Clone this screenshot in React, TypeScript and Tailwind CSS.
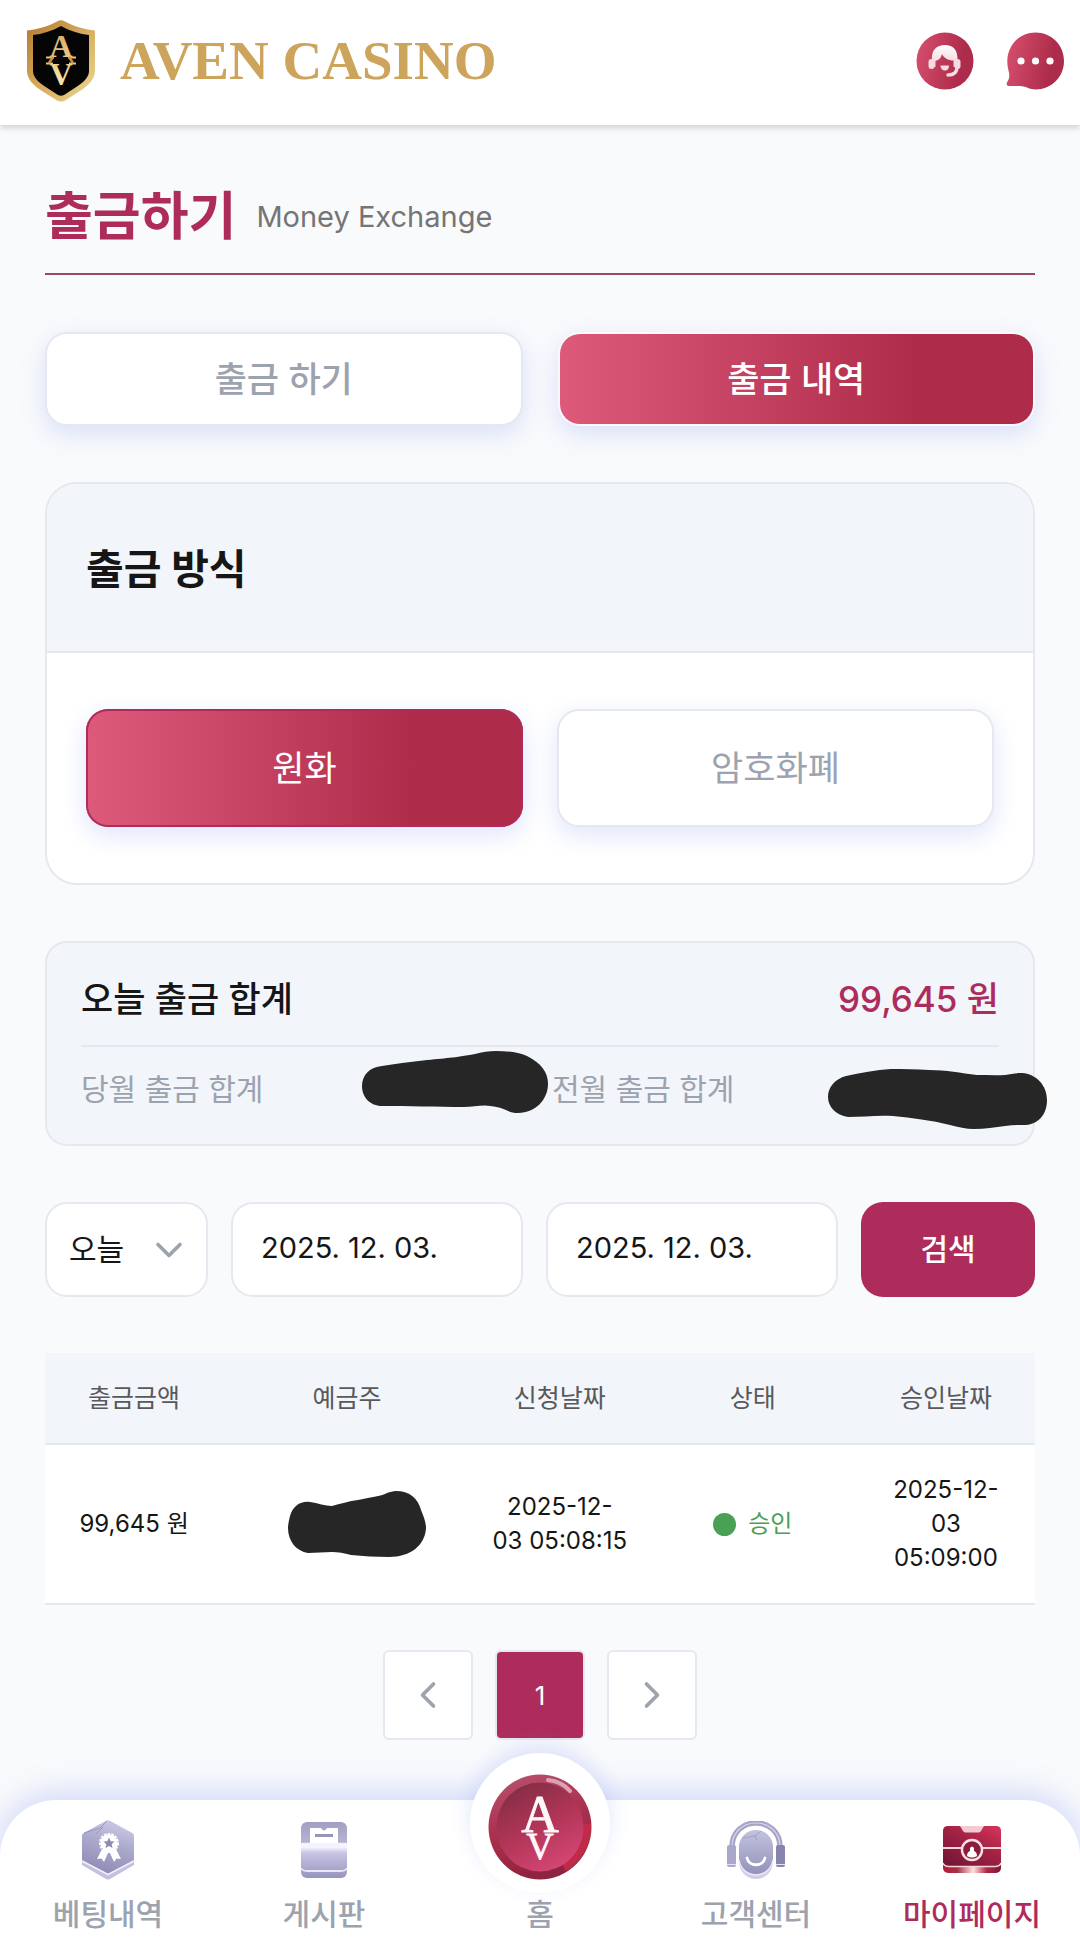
import { useState, type ReactNode } from "react";
import { ChevronDown, ChevronLeft, ChevronRight } from "lucide-react";

interface NavItem {
  label: string;
  href: string;
  icon: ReactNode;
}

interface Withdrawal {
  id: number;
  amount: string;
  requested: string[];
  status: string;
  approved: string[];
}

const withdrawals: Withdrawal[] = [
  {
    id: 1,
    amount: "99,645 원",
    requested: ["2025-12-", "03 05:08:15"],
    status: "승인",
    approved: ["2025-12-", "03", "05:09:00"],
  },
];

function ShieldLogo() {
  return (
    <svg width="70" height="84" viewBox="0 0 70 84" aria-hidden="true">
      <defs>
        <linearGradient id="gold" x1="0" y1="0" x2="1" y2="1">
          <stop offset="0" stopColor="#b5792f" />
          <stop offset="0.45" stopColor="#d3a659" />
          <stop offset="1" stopColor="#eedb97" />
        </linearGradient>
        <linearGradient id="goldText" x1="0" y1="0" x2="0" y2="1">
          <stop offset="0" stopColor="#d9a75c" />
          <stop offset="1" stopColor="#fbeeba" />
        </linearGradient>
      </defs>
      <path
        d="M35 1.5 Q36 1 38 2 C47 7 58 10.500 69 11.500 V52 C69 60 62 67 54 72 L39 81.500 Q35 83.500 31 81.500 L16 72 C8 67 1 60 1 52 V11.500 C12 10.500 23 7 32 2 Q34 1 35 1.500 Z"
        fill="url(#gold)"
      />
      <path
        d="M35 7 C44 12 54 15 63 16 V52 C63 58 58 63 51 67.500 L38 76 Q35 77.500 32 76 L19 67.500 C12 63 7 58 7 52 V16 C16 15 26 12 35 7 Z"
        fill="#050505"
      />
      <text
        fill="url(#goldText)"
        fontFamily="'Liberation Serif', serif"
        fontWeight="bold"
        fontSize="32"
        textAnchor="middle"
      >
        <tspan x="35" y="38">A</tspan>
        <tspan x="35" y="66">V</tspan>
      </text>
      <path d="M20 38.500 H28 M42 38.500 H50 M20 44.500 H27 M43 44.500 H50" stroke="#e6c27c" strokeWidth="2" />
      <path d="M27 38 L23 44 M43 38 L47 44" stroke="#c89243" strokeWidth="2.500" />
    </svg>
  );
}

function SupportIcon() {
  return (
    <svg width="58" height="58" viewBox="0 0 58 58" aria-hidden="true">
      <defs>
        <linearGradient id="badge" x1="0" y1="0" x2="1" y2="0.2">
          <stop offset="0" stopColor="#d8506f" />
          <stop offset="0.85" stopColor="#ae2c4b" />
        </linearGradient>
        <linearGradient id="hair" x1="0" y1="0" x2="0" y2="1">
          <stop offset="0" stopColor="#fff" />
          <stop offset="1" stopColor="#f1cfd8" />
        </linearGradient>
      </defs>
      <circle cx="29" cy="29" r="28.500" fill="url(#badge)" />
      <path
        d="M16 28 C15 18 21 13 29 13 C37 13 42 18 41.500 28 L41 35 L37.500 35 V28.500 C32 28.500 28 26 26 22 C25 26 23 28 19.500 29 V35 H16 Z"
        fill="url(#hair)"
      />
      <rect x="12.500" y="27" width="6" height="10" rx="3" fill="#f5dbe2" />
      <rect x="38.500" y="27" width="6" height="10" rx="3" fill="#f5dbe2" />
      <path d="M41 35 C41 40 38 43 32 43" fill="none" stroke="#f5dbe2" strokeWidth="3.500" strokeLinecap="round" />
      <path d="M24.500 33.500 H33 C33 36.500 31.500 38.500 29 38.500 C26.500 38.500 24.500 36.500 24.500 33.500 Z" fill="#f5dbe2" />
    </svg>
  );
}

function ChatIcon() {
  return (
    <svg width="58" height="58" viewBox="0 0 58 58" aria-hidden="true">
      <path
        d="M29.500 0.500 C45.500 0.500 58 13 58 29 C58 45 45.500 57.500 29.500 57.500 C24 57.500 19 54 14 54 H3 C0.500 54 0 52 1.500 49.500 C4 46 3.500 42 2.500 38.500 C-3 18 11 0.500 29.500 0.500 Z"
        fill="url(#badge)"
      />
      <circle cx="15" cy="29" r="3.600" fill="#fff" />
      <circle cx="29.500" cy="29" r="3.600" fill="#fff" />
      <circle cx="44" cy="29" r="3.600" fill="#fff" />
    </svg>
  );
}

function HomeCoin() {
  return (
    <svg width="104" height="106" viewBox="0 0 104 106" aria-hidden="true">
      <defs>
        <linearGradient id="rim" x1="0" y1="0" x2="0.300" y2="1">
          <stop offset="0" stopColor="#b85570" />
          <stop offset="0.500" stopColor="#ac3352" />
          <stop offset="0.750" stopColor="#a22a44" />
          <stop offset="1" stopColor="#8f2440" />
        </linearGradient>
        <linearGradient id="coin" x1="0.200" y1="0" x2="0.700" y2="1">
          <stop offset="0" stopColor="#822c44" />
          <stop offset="0.500" stopColor="#b03557" />
          <stop offset="1" stopColor="#d64775" />
        </linearGradient>
      </defs>
      <ellipse cx="52" cy="53" rx="51.500" ry="52.500" fill="url(#rim)" />
      <path d="M103 50 A51 52 0 0 1 78 97 L74 90 C88 82 95 68 95 50 Z" fill="#c02c47" />
      <ellipse cx="52" cy="53" rx="43.500" ry="44.500" fill="url(#coin)" />
      <path d="M60 6 C69 7 77 11 82 17" fill="none" stroke="#dba3b2" strokeWidth="4" strokeLinecap="round" />
      <text
        fill="#fff6fa"
        stroke="#fff6fa"
        strokeWidth="0.800"
        fontFamily="'Liberation Serif', serif"
        textAnchor="middle"
      >
        <tspan x="52" y="58" fontSize="52">A</tspan>
        <tspan x="52" y="85" fontSize="38">V</tspan>
      </text>
    </svg>
  );
}

function BettingIcon() {
  return (
    <svg width="52" height="60" viewBox="0 0 52 60" aria-hidden="true">
      <defs>
        <linearGradient id="lilac" x1="0.800" y1="0" x2="0.500" y2="1">
          <stop offset="0" stopColor="#d0cde9" />
          <stop offset="0.500" stopColor="#a9a7ca" />
          <stop offset="1" stopColor="#8f8db5" />
        </linearGradient>
      </defs>
      <path d="M24 1 Q26 0 28 1 L50 13 Q52 14 52 16 V45 L28 59 Q26 60 24 59 L0 45 V16 Q0 14 2 13 Z" fill="#c4c1e0" />
      <path d="M24 1 Q26 0 28 1 L50 13 Q52 14 52 16 V40 L26 54 L0 40 V16 Q0 14 2 13 Z" fill="url(#lilac)" />
      <path d="M0 41 L26 54.500 L52 41" fill="none" stroke="#efedfa" strokeWidth="1.800" />
      <path d="M2 13 L18 8 L25 1 M14 14 L21 7" stroke="#8c89b0" strokeWidth="0.700" fill="none" />
      <path d="M20 29 L15 39 L19.500 38.500 L22 42 L26 33 H28 L32 42 L34.500 38.500 L39 39 L34 29 Z" fill="#fff" />
      <circle cx="27" cy="23" r="8.500" fill="#fff" stroke="#fff" strokeWidth="3" strokeDasharray="2.500 1" />
      <path
        d="M27 17.500 L28.700 21.200 L32.500 21.600 L29.700 24.200 L30.500 28 L27 26.100 L23.500 28 L24.300 24.200 L21.500 21.600 L25.300 21.200 Z"
        fill="#8e8caf"
      />
    </svg>
  );
}

function BoardIcon() {
  return (
    <svg width="46" height="56" viewBox="0 0 46 56" aria-hidden="true">
      <defs>
        <linearGradient id="board" x1="0" y1="0" x2="0" y2="1">
          <stop offset="0" stopColor="#a19fc2" />
          <stop offset="0.350" stopColor="#b5b3d3" />
          <stop offset="0.450" stopColor="#f5f3ff" />
          <stop offset="0.550" stopColor="#c8c6e4" />
          <stop offset="1" stopColor="#9694bd" />
        </linearGradient>
      </defs>
      <rect width="46" height="56" rx="6" fill="url(#board)" />
      <path d="M9 6 H20 Q23 11 26 6 H37 V21 H9 Z" fill="#fff" />
      <rect x="14" y="12" width="18" height="3" fill="#9795b6" />
      <rect y="21" width="46" height="5" fill="#f4f2fd" />
      <path d="M0 46 Q1 49 6 49 H40 Q45 49 46 46" fill="none" stroke="#ebe9f8" strokeWidth="1.800" />
    </svg>
  );
}

function CenterIcon() {
  return (
    <svg width="58" height="58" viewBox="0 0 58 58" aria-hidden="true">
      <defs>
        <linearGradient id="face" x1="0" y1="0" x2="0" y2="1">
          <stop offset="0" stopColor="#c3c3e0" />
          <stop offset="1" stopColor="#9392bb" />
        </linearGradient>
      </defs>
      <path d="M5 26 C5 -6 53 -6 53 26" fill="none" stroke="#a7a4c8" strokeWidth="5.500" />
      <path d="M5 26 C5 -6 53 -6 53 26" fill="none" stroke="#d8d6ec" strokeWidth="1.200" />
      <rect x="12" y="10" width="34" height="48" rx="17" fill="#cfcde8" />
      <rect x="12" y="9" width="34" height="44" rx="17" fill="url(#face)" />
      <path d="M12 39 C15 59 43 59 46 39" fill="none" stroke="#ebe9f8" strokeWidth="1.500" />
      <rect y="24" width="9" height="22" rx="2" fill="#aaa8ca" />
      <rect x="49" y="24" width="9" height="22" rx="2" fill="#8784ae" />
      <path d="M0 43.500 H9 M49 43.500 H58" stroke="#e3e1f3" strokeWidth="1.200" />
      <path d="M20 37 C22 46 36 46 38 37" fill="none" stroke="#fff" strokeWidth="2.800" strokeLinecap="round" />
      <path d="M16 17 L28 15 L34 10 M28 15 L30 19" fill="none" stroke="#9694b8" strokeWidth="0.700" />
    </svg>
  );
}

function WalletIcon() {
  return (
    <svg width="58" height="48" viewBox="0 0 58 48" aria-hidden="true">
      <defs>
        <linearGradient id="wallet" x1="0" y1="1" x2="0.800" y2="0">
          <stop offset="0" stopColor="#6f1432" />
          <stop offset="0.600" stopColor="#a02243" />
          <stop offset="1" stopColor="#cf3157" />
        </linearGradient>
        <linearGradient id="walletBase" x1="0" y1="0" x2="1" y2="0">
          <stop offset="0" stopColor="#b01f35" />
          <stop offset="0.250" stopColor="#a83144" />
          <stop offset="0.520" stopColor="#fbe3e0" />
          <stop offset="0.750" stopColor="#b02a45" />
          <stop offset="1" stopColor="#7c1838" />
        </linearGradient>
      </defs>
      <rect y="2" width="58" height="45" rx="5" fill="url(#walletBase)" />
      <path d="M5 0 H53 Q58 0 58 5 V36 Q58 40 53 40 H5 Q0 40 0 36 V5 Q0 0 5 0 Z" fill="url(#wallet)" />
      <path d="M17 0 H41 L38 5 Q37 6.500 35 6.500 H23 Q21 6.500 20 5 Z" fill="#f3c9d3" />
      <path d="M0 22 H58" stroke="#f6d3dc" strokeWidth="1.800" />
      <path d="M0 37 Q1 40.500 6 40.500 H52 Q57 40.500 58 37" fill="none" stroke="#f6d3dc" strokeWidth="1.500" />
      <circle cx="29" cy="24" r="10" fill="#8a1d3b" stroke="#fbdfe6" strokeWidth="2.400" />
      <path d="M24 30 Q24 26 27 25 V22 Q29 19 31 22 V25 Q34 26 34 30 Q29 33 24 30 Z" fill="#fff" />
    </svg>
  );
}

const leftItems: NavItem[] = [
  { label: "베팅내역", href: "#bets", icon: <BettingIcon /> },
  { label: "게시판", href: "#board", icon: <BoardIcon /> },
];

const gradientFill = "bg-[linear-gradient(90deg,#de5a7a_0%,#ae2b4a_76%)] text-white";
const softShadow = "shadow-[0_8px_24px_rgba(110,135,240,0.22)]";

function BottomNav() {
  return (
    <nav className="sticky bottom-0 grid grid-cols-5 rounded-t-[56px] bg-white pt-[18px] pb-[17px] text-[30px] leading-9 font-medium text-[#9ca3af] shadow-[0_-6px_32px_rgba(110,135,240,0.3)]">
      {leftItems.map((item) => (
        <a key={item.label} href={item.href} className="flex flex-col items-center gap-[14px]">
          <span className="flex h-16 items-center">{item.icon}</span>
          {item.label}
        </a>
      ))}
      <a href="#home" className="relative flex flex-col items-center pt-[78px]">
        <span className="absolute -top-[65px] flex size-[140px] items-center justify-center rounded-full bg-white pt-2 shadow-[0_-8px_20px_rgba(110,135,240,0.2)]">
          <HomeCoin />
        </span>
        홈
      </a>
      <a href="#center" className="flex flex-col items-center gap-[14px]">
        <span className="flex h-16 items-center">
          <CenterIcon />
        </span>
        고객센터
      </a>
      <a href="#mypage" className="flex flex-col items-center gap-[14px] text-[#ae2c5c]">
        <span className="flex h-16 items-center">
          <WalletIcon />
        </span>
        마이페이지
      </a>
    </nav>
  );
}

export default function App() {
  const [tab, setTab] = useState("history");
  const [method, setMethod] = useState("krw");
  const [from, setFrom] = useState("2025. 12. 03.");
  const [to, setTo] = useState("2025. 12. 03.");

  const idleTab = "border-2 border-[#e5e8ee] bg-white text-[#9ca3af]";
  const activeTab = `border-2 border-transparent bg-clip-padding ${gradientFill}`;
  const activeMethod = `inset-ring-2 inset-ring-[#ae2c5c] ${gradientFill}`;

  return (
    <div className="flex min-h-screen flex-col bg-[#f9fafc] font-[Inter,'Noto_Sans_CJK_KR',sans-serif] text-[#161616]">
      {/* Header */}
      <header className="flex h-[125px] items-center justify-between bg-white pr-4 pb-1 pl-[26px] shadow-[0_3px_6px_rgba(60,75,90,0.22)]">
        <a href="#home" className="flex items-center gap-6">
          <ShieldLogo />
          <span className="font-['Liberation_Serif',serif] text-[55px] leading-[64px] font-bold text-[#cda45c]">
            AVEN CASINO
          </span>
        </a>
        <div className="flex items-center gap-8">
          <button type="button" aria-label="고객센터">
            <SupportIcon />
          </button>
          <button type="button" aria-label="채팅">
            <ChatIcon />
          </button>
        </div>
      </header>

      <main className="flex-1 px-[45px] pb-14">
        <div className="flex items-center gap-5 border-b-2 border-[#99466c] pt-[62px] pb-[26px]">
          <h1 className="text-[52px] leading-[60px] font-bold text-[#ae2c5c]">출금하기</h1>
          <span className="text-[29px] leading-[60px] text-[#757575]">Money Exchange</span>
        </div>

        {/* Tabs */}
        <div className="mt-[57px] grid grid-cols-2 gap-[35px] text-[35px] font-medium">
          <button
            type="button"
            onClick={() => setTab("request")}
            className={`h-[94px] rounded-[22px] ${softShadow} ${tab === "request" ? activeTab : idleTab}`}
          >
            출금 하기
          </button>
          <button
            type="button"
            onClick={() => setTab("history")}
            className={`h-[94px] rounded-[22px] ${softShadow} ${tab === "history" ? activeTab : idleTab}`}
          >
            출금 내역
          </button>
        </div>

        {/* Withdrawal method */}
        <section className="mt-14 overflow-hidden rounded-[32px] border-2 border-[#e5e8ee] bg-white">
          <h2 className="border-b-2 border-[#e5e8ee] bg-[#f2f5fa] px-[39px] pt-[55px] pb-[52px] text-[41px] leading-[60px] font-bold">
            출금 방식
          </h2>
          <div className="grid grid-cols-2 gap-[34px] px-[39px] py-14 text-[35px]">
            <button
              type="button"
              onClick={() => setMethod("krw")}
              className={`h-[118px] rounded-[22px] ${softShadow} ${method === "krw" ? activeMethod : idleTab}`}
            >
              원화
            </button>
            <button
              type="button"
              onClick={() => setMethod("crypto")}
              className={`h-[118px] rounded-[22px] ${softShadow} ${method === "crypto" ? activeMethod : idleTab}`}
            >
              암호화폐
            </button>
          </div>
        </section>

        {/* Totals */}
        <section className="mt-14 rounded-[22px] border-2 border-[#e5e8ee] bg-[#f2f5fa] px-[34px] pt-7 pb-[31px]">
          <div className="flex items-center justify-between border-b-2 border-[#e5e8ee] pb-[18px] text-[35px] leading-[56px] font-medium">
            <span>오늘 출금 합계</span>
            <span className="text-[#ae2c5c]">99,645 원</span>
          </div>
          <div className="grid grid-cols-2 gap-6 pt-[18px] text-[30px] leading-[48px] text-[#9ca3af]">
            <div className="relative">
              당월 출금 합계
              <svg className="absolute -top-[14px] -right-5" width="186" height="62" viewBox="0 0 186 62" aria-hidden="true">
                <path
                  d="M20 15 C33 13 47 11 61 9.500 C84 7 92 7 113 3 C120 1 127 0 134 0 C145 0 156 1 165 5 C179 12 186 21 186 33 C186 48 174 62 156 62 C151 62 148 61 144 59 C137 56 130 55 123 54.500 C116 54.500 109 56 102 56 C75 56 45 55 20 55 C8 55 0 46 0 35 C0 24 8 16 20 15 Z"
                  fill="#262626"
                />
              </svg>
            </div>
            <div className="relative">
              전월 출금 합계
              <svg className="absolute top-1 -right-12" width="219" height="60" viewBox="0 0 219 60" aria-hidden="true">
                <path
                  d="M18 7 C32 4 48 1 63 0 C76 0 88 0 101 1 C118 1 133 4 149 6 C158 6 168 6.500 177 6 C183 5 188 4 194 4 C208 5 219 16 219 31 C219 46 210 55 198 56 C191 56 184 56 177 57 C167 58 157 60 146 60 C138 60 130 58 122 56 C103 51 84 49 65 47 C49 46 34 48 20 48 C8 46 0 38 0 28 C0 18 7 10 18 7 Z"
                  fill="#262626"
                />
              </svg>
            </div>
          </div>
        </section>

        {/* Search filter */}
        <form className="mt-14 flex gap-[23px] text-[29px]" onSubmit={(e) => e.preventDefault()}>
          <div className="relative w-[163px]">
            <select
              aria-label="조회 기간"
              className="h-[95px] w-full appearance-none rounded-[22px] border-2 border-[#e5e8ee] bg-white pl-[22px] text-[30px]"
            >
              <option>오늘</option>
            </select>
            <ChevronDown
              className="pointer-events-none absolute top-[26px] right-[17px] text-[#9ca3af]"
              size={44}
              strokeWidth={2}
            />
          </div>
          <input
            type="text"
            aria-label="시작일"
            value={from}
            onChange={(e) => setFrom(e.target.value)}
            className="h-[95px] min-w-0 flex-1 rounded-[22px] border-2 border-[#e5e8ee] bg-white px-7 pb-1"
          />
          <input
            type="text"
            aria-label="종료일"
            value={to}
            onChange={(e) => setTo(e.target.value)}
            className="h-[95px] min-w-0 flex-1 rounded-[22px] border-2 border-[#e5e8ee] bg-white px-7 pb-1"
          />
          <button type="submit" className="h-[95px] w-[174px] rounded-[22px] bg-[#ae2c5c] text-[30px] font-medium text-white">
            검색
          </button>
        </form>

        {/* History */}
        <table className="mt-14 w-full table-fixed text-center text-[24px] leading-[34px]">
          <thead className="bg-[#f2f5fa] text-[25px] text-[#58595b]">
            <tr className="border-b-2 border-[#e5e8ee]">
              <th className="w-[18%] py-7 font-normal">출금금액</th>
              <th className="w-[25%] py-7 font-normal">예금주</th>
              <th className="w-[18%] py-7 font-normal">신청날짜</th>
              <th className="w-[21%] py-7 font-normal">상태</th>
              <th className="w-[18%] py-7 font-normal">승인날짜</th>
            </tr>
          </thead>
          <tbody className="bg-white">
            {withdrawals.map((row) => (
              <tr key={row.id} className="border-b-2 border-[#e5e8ee]">
                <td className="py-7">{row.amount}</td>
                <td className="py-7 pl-5">
                  <svg className="mx-auto" width="138" height="66" viewBox="0 0 138 66" aria-hidden="true">
                    <path
                      d="M2 25 C5 15 12 10 22 11 C30 12 37 15 44 15 C52 13 61 10 70 9 C84 6 94 5 99 2 C102 1 105 0 108 0 C121 0 130 7 133 19 C136 26 138 32 138 37 C137 54 123 66 101 66 C88 66 75 65 63 64 C56 62 50 61 44 61 C36 61 28 62 20 62 C8 60 0 50 0 37 C0 33 1 29 2 25 Z"
                      fill="#262626"
                    />
                  </svg>
                </td>
                <td className="py-7">
                  {row.requested.map((line) => (
                    <span key={line} className="block">
                      {line}
                    </span>
                  ))}
                </td>
                <td className="py-7">
                  <span className="flex items-center justify-center gap-3 text-[#4aa055]">
                    <span className="size-[23px] rounded-full bg-[#4aa055]" />
                    {row.status}
                  </span>
                </td>
                <td className="py-7">
                  {row.approved.map((line) => (
                    <span key={line} className="block">
                      {line}
                    </span>
                  ))}
                </td>
              </tr>
            ))}
          </tbody>
        </table>

        {/* Pagination */}
        <div className="mt-[45px] flex justify-center gap-[22px] text-[26px]">
          <button
            type="button"
            aria-label="이전"
            className="flex size-[90px] items-center justify-center rounded-md border-2 border-[#e5e8ee] bg-white text-[#9ca3af]"
          >
            <ChevronLeft size={44} strokeWidth={2} />
          </button>
          <button
            type="button"
            className="size-[90px] rounded-md border-2 border-[#e5e8ee] bg-[#ae2c5c] text-white"
          >
            1
          </button>
          <button
            type="button"
            aria-label="다음"
            className="flex size-[90px] items-center justify-center rounded-md border-2 border-[#e5e8ee] bg-white text-[#9ca3af]"
          >
            <ChevronRight size={44} strokeWidth={2} />
          </button>
        </div>
      </main>

      <BottomNav />
    </div>
  );
}
